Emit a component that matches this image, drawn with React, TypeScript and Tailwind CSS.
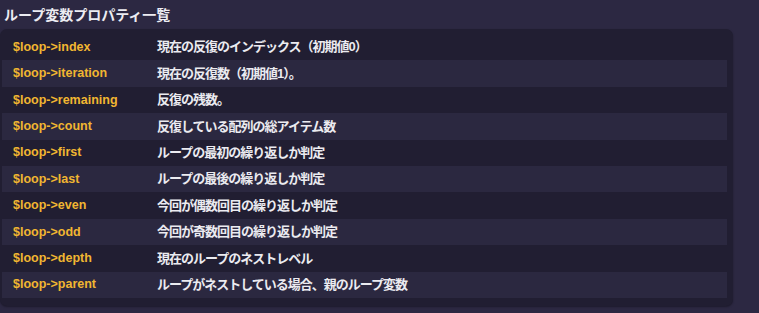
import React from "react";

const rows = [
  ["$loop->index", "現在の反復のインデックス（初期値0）"],
  ["$loop->iteration", "現在の反復数（初期値1）。"],
  ["$loop->remaining", "反復の残数。"],
  ["$loop->count", "反復している配列の総アイテム数"],
  ["$loop->first", "ループの最初の繰り返しか判定"],
  ["$loop->last", "ループの最後の繰り返しか判定"],
  ["$loop->even", "今回が偶数回目の繰り返しか判定"],
  ["$loop->odd", "今回が奇数回目の繰り返しか判定"],
  ["$loop->depth", "現在のループのネストレベル"],
  ["$loop->parent", "ループがネストしている場合、親のループ変数"],
];

export default function App() {
  return (
    <div
      className="w-[759px] h-[313px] bg-[#2c2842] overflow-hidden"
      style={{ fontFamily: '"Liberation Sans", "Noto Sans CJK JP", sans-serif' }}
    >
      <h2 className="h-[29px] pl-[4px] pt-[6px] text-[14px] leading-[18px] font-bold text-[#ececf2]">
        ループ変数プロパティ一覧
      </h2>
      <div className="w-[733px] rounded-[7px] bg-[#211e32] pl-[2px] pr-[6px] pt-[5px] pb-[8px] shadow-[0_1px_2px_rgba(0,0,0,0.35)]">
        {rows.map(([k, v], i) => (
          <div
            key={k}
            className={`flex items-center h-[26.4px] ${i % 2 === 1 ? "bg-[#2b2840]" : ""}`}
          >
            <span className="w-[155px] pl-[11px] text-[12.5px] font-bold text-[#f1b631]">{k}</span>
            <span className="text-[13px] tracking-[-1px] font-bold text-[#ebebf0]">{v}</span>
          </div>
        ))}
      </div>
    </div>
  );
}
